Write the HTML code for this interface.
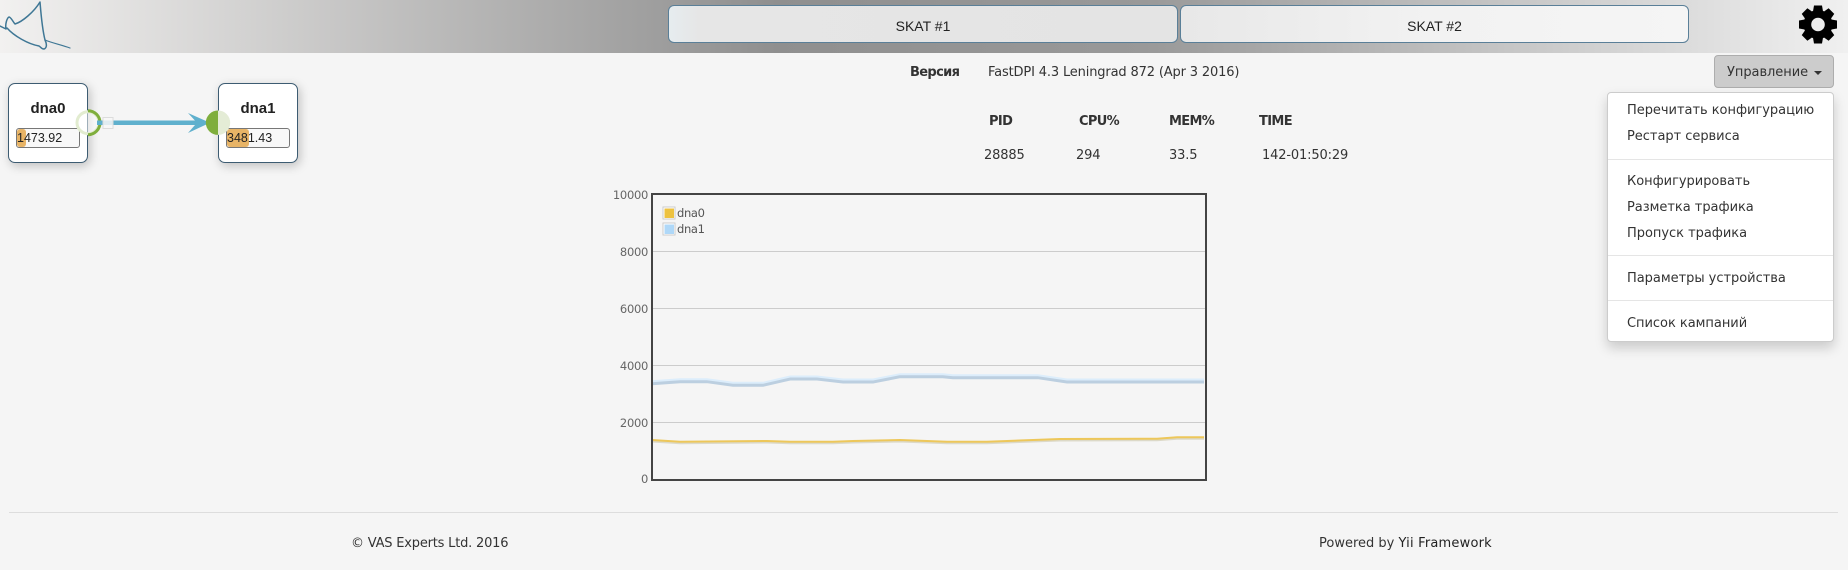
<!DOCTYPE html>
<html lang="ru"><head><meta charset="utf-8"><title>SKAT</title>
<style>
html,body{margin:0;padding:0;width:1848px;height:570px;overflow:hidden;background:#f5f5f5}
body{position:relative;font-family:"DejaVu Sans","Liberation Sans",sans-serif;font-size:13px;color:#333}
.t{position:absolute;white-space:nowrap;line-height:20px;letter-spacing:-.15px}
.b{font-weight:bold;letter-spacing:-.65px}
#hd{position:absolute;left:0;top:0;width:1848px;height:53px;background:linear-gradient(90deg,#f2f1f0 0,#8f8f8f 42%,#999 62%,#f0f0f0 100%)}
.sk{position:absolute;top:5px;height:36px;border:1px solid #5a7f98;border-radius:6px;text-align:center;font:14px/40px "Liberation Sans",sans-serif;color:#222;box-sizing:content-box}
#btn{position:absolute;left:1714px;top:55px;width:120px;height:33px;box-sizing:border-box;background:#ccc;border:1px solid #adadad;border-radius:4px;line-height:34px;padding-left:12px;color:#333;letter-spacing:-.05px}
#btn i{position:absolute;left:99px;top:15px;border-left:4px solid transparent;border-right:4px solid transparent;border-top:4px solid #333}
#menu{position:absolute;left:1607px;top:92px;width:227px;height:250px;box-sizing:border-box;background:#fff;border:1px solid #ccc;border-radius:4px;box-shadow:0 6px 12px rgba(0,0,0,.175)}
#menu span{position:absolute;left:19px;white-space:nowrap;line-height:20px;color:#333;letter-spacing:-.03px}
#menu hr{position:absolute;left:0;width:100%;margin:0;border:0;height:1px;background:#e5e5e5}
.nd{position:absolute;top:83px;width:80px;height:80px;box-sizing:border-box;background:#fff;border:1px solid #3d5c72;border-radius:7px;box-shadow:2px 3px 10px rgba(0,0,0,.22);font-family:"Liberation Sans",sans-serif}
.nd b{position:absolute;left:0;right:0;top:15px;text-align:center;font-size:15px;line-height:20px;color:#222}
.ib{position:absolute;left:7px;top:44px;width:64px;height:20px;box-sizing:border-box;border:1px solid #777;border-radius:3px;background:#f8f8f8;overflow:hidden;font-size:12.500px;line-height:19px;color:#222}
.ib i{position:absolute;left:0;top:0;bottom:0;background:#e8b466;border-radius:3px}
.ib span{position:relative}
.ax{position:absolute;width:40px;text-align:right;left:608px;font:11.5px/14px "DejaVu Sans",sans-serif;letter-spacing:-.3px;color:#666}
</style></head><body>
<div id="hd"></div>
<svg style="position:absolute;left:0;top:0" width="80" height="53" fill="none" stroke="#3f7795" stroke-linecap="round" stroke-linejoin="round">
<path d="M0 26L6 29C5 24 7 18 9 17C11 17 13 22 15 24C22 22 34 12 40 2C41 14 42 28 45 40C47 44 47 48 44 49C41 49 41 47 39 46C28 44 14 36 7 28" stroke-width="1.5"/>
<path d="M45 40C52 43 62 45 70 48" stroke-width="1.2"/>
</svg>
<div class="sk" style="left:668px;width:508px;background:linear-gradient(90deg,#e6ecef,#e6e6e6 6%,#e4e4e4)">SKAT #1</div>
<div class="sk" style="left:1180px;width:507px;background:linear-gradient(90deg,#e8e8e8,#f2f2f2 50%,#f5f5f5)">SKAT #2</div>
<svg style="position:absolute;left:1798px;top:5px" width="40" height="40" viewBox="-20 -19.500 40 40"><g fill="#000"><path fill-rule="evenodd" d="M0-14.500a14.500 14.500 0 100 29 14.500 14.500 0 000-29zM0-6.800a6.800 6.800 0 110 13.600 6.800 6.800 0 010-13.600z"/>
<path id="tg" d="M-4-19H4L5.200-12H-5.200Z"/>
<path d="M-4-19H4L5.200-12H-5.200Z" transform="rotate(45)"/><path d="M-4-19H4L5.200-12H-5.200Z" transform="rotate(90)"/><path d="M-4-19H4L5.200-12H-5.200Z" transform="rotate(135)"/><path d="M-4-19H4L5.200-12H-5.200Z" transform="rotate(180)"/><path d="M-4-19H4L5.200-12H-5.200Z" transform="rotate(225)"/><path d="M-4-19H4L5.200-12H-5.200Z" transform="rotate(270)"/><path d="M-4-19H4L5.200-12H-5.200Z" transform="rotate(315)"/></g></svg>

<span class="t b" style="left:910px;top:63px">Версия</span>
<span class="t" style="left:988px;top:63px">FastDPI 4.3 Leningrad 872 (Apr 3 2016)</span>
<span class="t b" style="left:989px;top:112px">PID</span>
<span class="t b" style="left:1079px;top:112px">CPU%</span>
<span class="t b" style="left:1169px;top:112px">MEM%</span>
<span class="t b" style="left:1259px;top:112px">TIME</span>
<span class="t" style="left:984px;top:146px">28885</span>
<span class="t" style="left:1076px;top:146px">294</span>
<span class="t" style="left:1169px;top:146px">33.5</span>
<span class="t" style="left:1262px;top:146px">142-01:50:29</span>

<div id="btn">Управление<i></i></div>
<div id="menu">
<span style="top:8px">Перечитать конфигурацию</span>
<span style="top:34px">Рестарт сервиса</span>
<hr style="top:66px">
<span style="top:79px">Конфигурировать</span>
<span style="top:105px">Разметка трафика</span>
<span style="top:131px">Пропуск трафика</span>
<hr style="top:162px">
<span style="top:176px">Параметры устройства</span>
<hr style="top:207px">
<span style="top:221px">Список кампаний</span>
</div>

<div class="nd" style="left:8px"><b>dna0</b><div class="ib"><i style="width:9px"></i><span style="left:0">1473.92</span></div></div>
<div class="nd" style="left:218px"><b>dna1</b><div class="ib"><i style="width:22px"></i><span style="left:0">3481.43</span></div></div>

<svg style="position:absolute;left:70px;top:100px" width="170" height="50">
<circle cx="18" cy="22.700" r="11" fill="#fff" fill-opacity=".5" stroke="#e2ecd0" stroke-width="3"/>
<path d="M18 10.700A12 12 0 0 1 18 34.700" fill="none" stroke="#7fae3c" stroke-width="3"/>
<rect x="27" y="20.500" width="105" height="4.500" fill="#5fb0cd"/>
<rect x="33" y="17.500" width="10" height="11" fill="#f7f7f7" fill-opacity=".85" stroke="#dcdcdc"/>
<path d="M118 13L140 22.700L118 33L127 22.700Z" fill="#5fb0cd"/>
<path d="M148 10.500A12.200 12.200 0 0 1 148 34.900Z" fill="#e4ecd6"/>
<path d="M148 10.500A12.200 12.200 0 0 0 148 34.900Z" fill="#7fae3c"/>
</svg>

<svg style="position:absolute;left:640px;top:180px" width="580" height="310" fill="none">
<g transform="translate(-640 -180)">
<path d="M653 251.500H1205M653 308.500H1205M653 365.500H1205M653 422.500H1205" stroke="#ccc" stroke-width="1"/>
<path d="M652 383.200L680 381.200L707 381.200L733 384.800L763 384.800L790 378.500L817 378.500L843 381.500L873 381.500L900 376.200L943 376.200L953 377.200L1038 377.200L1067 381.500L1204 381.500" stroke="#bccfe0" stroke-width="4"/>
<path d="M652 381.200L680 379.200L707 379.200L733 382.800L763 382.800L790 376.500L817 376.500L843 379.500L873 379.500L900 374.200L943 374.200L953 375.200L1038 375.200L1067 379.500L1204 379.500" stroke="#dcedfb" stroke-width="2"/>
<path d="M652 441L680 442.700L767 442L790 442.700L833 442.700L853 442L900 441L947 442.700L987 442.700L1060 440L1157 439.700L1177 438.300L1204 438.300" stroke="#dcd9c8" stroke-width="3"/>
<path d="M652 440L680 441.700L767 441L790 441.700L833 441.700L853 441L900 440L947 441.700L987 441.700L1060 439L1157 438.700L1177 437.300L1204 437.300" stroke="#edc75a" stroke-width="2"/>
<rect x="652" y="194" width="554" height="286" stroke="#444" stroke-width="2"/>
<rect x="663" y="207" width="12" height="12" fill="#fff" stroke="#ccc"/><rect x="664.500" y="208.500" width="9.500" height="9.500" fill="#edc240"/>
<rect x="663" y="223" width="12" height="12" fill="#fff" stroke="#ccc"/><rect x="664.500" y="224.500" width="9.500" height="9.500" fill="#afd8f8"/>
</g></svg>
<span class="t" style="left:677px;top:203px;font-size:11.500px;letter-spacing:-.35px;color:#555">dna0</span>
<span class="t" style="left:677px;top:219px;font-size:11.500px;letter-spacing:-.35px;color:#555">dna1</span>
<div class="ax" style="top:188px">10000</div>
<div class="ax" style="top:245px">8000</div>
<div class="ax" style="top:302px">6000</div>
<div class="ax" style="top:358.500px">4000</div>
<div class="ax" style="top:415.500px">2000</div>
<div class="ax" style="top:472px">0</div>

<div style="position:absolute;left:9px;top:512px;width:1829px;height:1px;background:#ddd"></div>
<span class="t" style="left:351px;top:534px;letter-spacing:-.2px">© VAS Experts Ltd. 2016</span>
<span class="t" style="left:1319px;top:534px;letter-spacing:0">Powered by <span style="color:#222;letter-spacing:.2px">Yii Framework</span></span>
</body></html>
